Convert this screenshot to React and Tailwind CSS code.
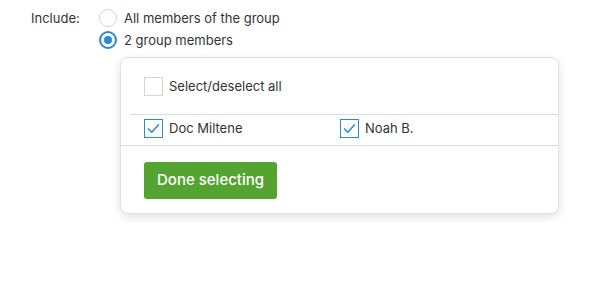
import React, { useState } from 'react';

const Check = () => (
    <svg viewBox="0 0 18 18" className="w-[15px] h-[15px]" fill="none">
        <path d="M3 9.5l4 4L15 4.5" stroke="#2a8ad4" strokeWidth="1.8" strokeLinecap="round" strokeLinejoin="round" />
    </svg>
);

const Checkbox = ({ checked, label }) => (
    <label className="flex items-center gap-[6px] cursor-pointer">
        <span
            className={`w-[19px] h-[19px] flex items-center justify-center bg-white border ${
                checked ? 'border-[#2a8ad4] border-[1.5px]' : 'border-[#d4d4d4]'
            }`}
        >
            {checked && <Check />}
        </span>
        <span className="text-[13px] leading-[19px] text-[#333]">{label}</span>
    </label>
);

const Radio = ({ checked, label }) => (
    <label className="flex items-center gap-[7px] cursor-pointer">
        <span
            className={`w-[18px] h-[18px] rounded-full flex items-center justify-center bg-white border ${
                checked ? 'border-[#2a8ad4] border-2' : 'border-[#d4d4d4]'
            }`}
        >
            {checked && <span className="w-[8px] h-[8px] rounded-full bg-[#2a8ad4]" />}
        </span>
        <span className="text-[13px] leading-[18px] text-[#333]">{label}</span>
    </label>
);

const App = () => {
    const [members] = useState(['Doc Miltene', 'Noah B.']);

    return (
        <div className="w-[610px] h-[288px] bg-white font-['Inter',sans-serif] pt-[9px] pl-[31px]">
            <div className="flex">
                <span className="text-[13px] leading-[18px] text-[#333] w-[68px]">Include:</span>
                <div className="flex flex-col gap-[4px]">
                    <Radio label="All members of the group" />
                    <Radio checked label="2 group members" />
                </div>
            </div>

            <div className="ml-[89px] mt-[8px] w-[439px] rounded-[8px] border border-[#e2e2e2] bg-white shadow-[0_3px_8px_rgba(0,0,0,0.12)]">
                <div className="px-[23px] pt-[19px] pb-[18px]">
                    <Checkbox label="Select/deselect all" />
                </div>
                <div className="ml-[9px] border-t border-[#dcdcdc]" />
                <div className="grid grid-cols-[196px_196px] px-[23px] pt-[4px] pb-[7px]">
                    {members.map(m => (
                        <Checkbox key={m} checked label={m} />
                    ))}
                </div>
                <div className="border-t border-[#dcdcdc]" />
                <div className="px-[23px] pt-[16px] pb-[14px]">
                    <button className="h-[37px] px-[13px] rounded-[3px] bg-[#55a331] text-white text-[15px] font-medium">
                        Done selecting
                    </button>
                </div>
            </div>
        </div>
    );
};

export default App;
